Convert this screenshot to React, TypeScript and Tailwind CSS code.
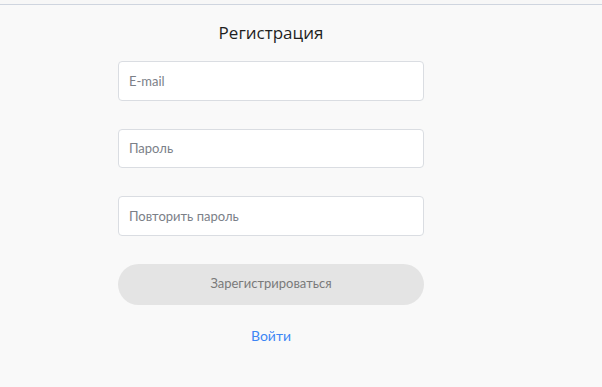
export default function App() {
  return (
    <div className="min-h-[387px] w-full bg-[#f9f9f9]">
      <div className="h-[4px] bg-[#f7f7f7]" />
      <div className="h-[1px] bg-[#cfd5df]" />
      <div className="pl-[118px]">
        <form className="flex w-[306px] flex-col">
          <h1
            className="mt-[17px] text-center text-[17px] leading-[22px] text-[#1f1f1f]"
            style={{ fontFamily: '"Open Sans", sans-serif' }}
          >
            Регистрация
          </h1>
          <div
            className="mt-[17px] flex flex-col gap-[28px]"
            style={{ fontFamily: 'Lato, sans-serif' }}
          >
            <input
              type="email"
              placeholder="E-mail"
              className="h-[39.5px] rounded-[4px] border border-[#dadde2] bg-white px-[10px] text-[13px] text-[#333] outline-none placeholder:text-[#7b8088]"
            />
            <input
              type="password"
              placeholder="Пароль"
              className="h-[39.5px] rounded-[4px] border border-[#dadde2] bg-white px-[10px] text-[13px] text-[#333] outline-none placeholder:text-[#7b8088]"
            />
            <input
              type="password"
              placeholder="Повторить пароль"
              className="h-[39.5px] rounded-[4px] border border-[#dadde2] bg-white px-[10px] text-[13px] text-[#333] outline-none placeholder:text-[#7b8088]"
            />
            <button
              type="button"
              disabled
              className="h-[41px] rounded-full bg-[#e4e4e4] text-[13px] text-[#7a7a7a]"
            >
              Зарегистрироваться
            </button>
          </div>
          <a
            href="#"
            className="mt-[21px] text-center text-[14px] leading-[20px] text-[#3d86f5]"
            style={{ fontFamily: 'Lato, sans-serif' }}
          >
            Войти
          </a>
        </form>
      </div>
    </div>
  )
}
